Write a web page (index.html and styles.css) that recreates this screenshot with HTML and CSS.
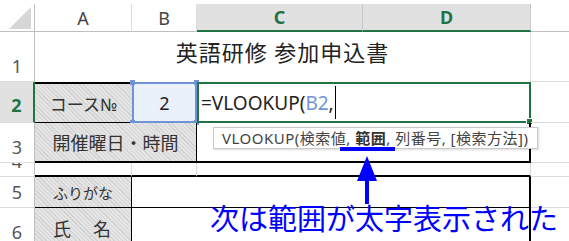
FILE: index.html
```html
<!DOCTYPE html>
<html>
<head>
    <title>英語研修 参加申込書</title>
    <link rel="stylesheet" href="styles.css">
</head>
<body>
    <div class="sheet">
        <!-- column headers -->
        <div class="corner"><span class="tri"></span></div>
        <div class="colhead">A</div>
        <div class="colhead">B</div>
        <div class="colhead on">C</div>
        <div class="colhead on">D</div>
        <div class="colhead blank"></div>

        <!-- row 1 -->
        <div class="rowhead">1</div>
        <div class="cell title">英語研修 参加申込書</div>
        <div class="cell extra"></div>

        <!-- row 2 -->
        <div class="rowhead on">2</div>
        <div class="cell label a2">コース№</div>
        <div class="cell ref">2
            <span class="handle tl"></span><span class="handle tr"></span>
            <span class="handle bl"></span><span class="handle br"></span>
        </div>
        <div class="cell active">=VLOOKUP(<span class="ref-text">B2</span>,<span class="caret"></span>
            <span class="fill"></span>
        </div>
        <div class="cell extra"></div>

        <!-- row 3 -->
        <div class="rowhead">3</div>
        <div class="cell label a3">開催曜日・時間</div>
        <div class="cell c3"></div>
        <div class="cell extra"></div>

        <!-- row 4 -->
        <div class="rowhead short">4</div>
        <div class="cell r4"></div>
        <div class="cell r4"></div>
        <div class="cell r4 wide"></div>
        <div class="cell extra"></div>

        <!-- row 5 -->
        <div class="rowhead">5</div>
        <div class="cell label small a5">ふりがな</div>
        <div class="cell entry"></div>
        <div class="cell extra"></div>

        <!-- row 6 -->
        <div class="rowhead">6</div>
        <div class="cell label a6">氏　名</div>
        <div class="cell entry last"></div>
        <div class="cell extra"></div>
    </div>

    <!-- function tooltip and annotation -->
    <div class="tooltip">VLOOKUP(検索値, <b>範囲</b>, 列番号, [検索方法])</div>
    <div class="mark"></div>
    <svg class="arrow" width="24" height="52" viewBox="0 0 24 52">
        <polygon points="12,2 22,27 2,27" fill="#0000ff"/>
        <rect x="10" y="26" width="4" height="24" fill="#0000ff"/>
    </svg>
    <div class="note">次は範囲が太字表示された</div>
</body>
</html>
```

FILE: styles.css
```css
body {
    margin: 0;
    width: 569px;
    height: 241px;
    overflow: hidden;
    position: relative;
    background: #fff;
    font-family: "Noto Sans", "Noto Sans CJK JP", sans-serif;
    color: #222;
}

.sheet {
    display: grid;
    grid-template-columns: 35px 97px 65px 166px 168px 1fr;
    grid-template-rows: 28px 50px 41px 40px 14px 31px 40px;
    padding-top: 4px;
}

.corner {
    position: relative;
    border-right: 1px solid #bfbfbf;
    border-bottom: 1px solid #bfbfbf;
    box-sizing: border-box;
}

.tri {
    position: absolute;
    right: 3px;
    bottom: 2px;
    width: 22px;
    height: 22px;
    background: #d6d6d6;
    clip-path: polygon(100% 0, 100% 100%, 0 100%);
}

.colhead {
    box-sizing: border-box;
    border-right: 1px solid #dcdcdc;
    border-bottom: 1px solid #bfbfbf;
    display: flex;
    align-items: center;
    justify-content: center;
    font-size: 18px;
    line-height: 18px;
    color: #444;
}

.colhead.on {
    background: #e1e1e1;
    color: #217346;
    font-weight: bold;
    border-bottom: 2px solid #217346;
    border-right-color: #c8c8c8;
}

.colhead.blank {
    border-right: none;
}

.rowhead {
    box-sizing: border-box;
    border-right: 1px solid #bfbfbf;
    border-bottom: 1px solid #dcdcdc;
    display: flex;
    align-items: flex-end;
    justify-content: center;
    padding-bottom: 6px;
    font-size: 18px;
    line-height: 18px;
    color: #555;
    overflow: hidden;
}

.rowhead.on {
    background: #e1e1e1;
    color: #217346;
    font-weight: bold;
    border-right: 2px solid #217346;
    padding-bottom: 8px;
}

.cell {
    box-sizing: border-box;
    border-right: 1px solid #dcdcdc;
    border-bottom: 1px solid #dcdcdc;
    display: flex;
    align-items: center;
    justify-content: center;
    position: relative;
}

.title {
    grid-column: span 4;
    border-bottom: none;
    font-size: 22px;
    letter-spacing: 1px;
    padding-bottom: 12px;
}

.extra {
    border-right: none;
}

.label {
    background: repeating-linear-gradient(45deg, #d3d3d3 0 1px, #e4e4e4 1px 3px);
    font-size: 18px;
    color: #333;
}

.label.small {
    font-size: 15px;
}

.a2 {
    border-top: 2px solid #000;
    border-bottom: 1px solid #000;
    border-right: none;
    font-size: 17px;
}

.ref {
    background: #ebf1fb;
    border: 2px solid #7093d6;
    font-size: 18px;
}

.handle {
    position: absolute;
    width: 5px;
    height: 5px;
    background: #7093d6;
}

.handle.tl { top: -4px; left: -4px; }
.handle.tr { top: -4px; right: -4px; }
.handle.bl { bottom: -4px; left: -4px; }
.handle.br { bottom: -4px; right: -4px; }

.active {
    grid-column: span 2;
    border: 2px solid #217346;
    justify-content: flex-start;
    padding-left: 2px;
    font-size: 19px;
    white-space: pre;
}

.ref-text {
    color: #7093d6;
}

.caret {
    display: inline-block;
    width: 1px;
    height: 33px;
    background: #000;
    margin-left: 1px;
}

.fill {
    position: absolute;
    right: -4px;
    bottom: -4px;
    width: 5px;
    height: 5px;
    background: #217346;
    border: 1px solid #fff;
}

.a3 {
    grid-column: span 2;
    border-right: 1px solid #000;
    border-bottom: 2px solid #000;
}

.c3 {
    grid-column: span 2;
    border-right: 2px solid #000;
    border-bottom: 2px solid #000;
}

.r4 {
    border-bottom: 2px solid #000;
}

.r4.wide {
    grid-column: span 2;
}

.a5, .a6 {
    border-right: 1px solid #000;
    border-bottom: 1px solid #000;
}

.a6 {
    letter-spacing: 2px;
}

.entry {
    grid-column: span 3;
    border-right: 2px solid #000;
    border-bottom: 1px solid #000;
}

.entry.last {
    border-bottom: none;
}

.tooltip {
    position: absolute;
    left: 213px;
    top: 127px;
    width: 325px;
    height: 22px;
    box-sizing: border-box;
    background: #fff;
    border: 1px solid #c8c8c8;
    box-shadow: 1px 1px 2px rgba(0,0,0,0.15);
    padding-left: 8px;
    font-size: 15px;
    letter-spacing: 0.5px;
    line-height: 20px;
    color: #444;
    white-space: nowrap;
}

.tooltip b {
    color: #333;
}

.mark {
    position: absolute;
    left: 340px;
    top: 147px;
    width: 55px;
    height: 4px;
    background: #0000ff;
}

.arrow {
    position: absolute;
    left: 355px;
    top: 154px;
}

.note {
    position: absolute;
    left: 210px;
    top: 204px;
    font-size: 29px;
    line-height: 29px;
    color: #0000ff;
    white-space: nowrap;
}
```
